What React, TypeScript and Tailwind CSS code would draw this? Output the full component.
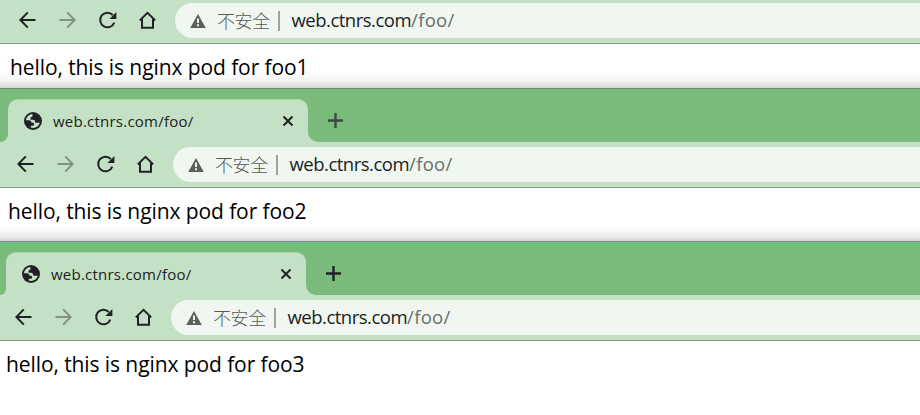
import React from "react";

const ink = "#202124";

function BackIcon() {
  return (
    <svg width="24" height="24" viewBox="0 0 24 24" fill="none" stroke={ink} strokeWidth="2" className="shrink-0">
      <path d="M20.5 12H5.7M12.8 4.4L5.4 12l7.4 7.6" />
    </svg>
  );
}

function ForwardIcon() {
  return (
    <svg width="24" height="24" viewBox="0 0 24 24" fill="none" stroke="#81927f" strokeWidth="2" className="shrink-0">
      <path d="M4.5 12h14.8M12.2 4.4L19.6 12l-7.4 7.6" />
    </svg>
  );
}

function ReloadIcon() {
  return (
    <svg width="24" height="24" viewBox="0 0 24 24" className="shrink-0">
      <path d="M19.3 14.6A7.3 7.3 0 1 1 17.8 7" fill="none" stroke={ink} strokeWidth="2" />
      <path d="M21.4 4v7h-7z" fill={ink} />
    </svg>
  );
}

function HomeIcon() {
  return (
    <svg width="24" height="24" viewBox="0 0 24 24" fill="none" stroke={ink} strokeWidth="2" className="shrink-0">
      <path d="M4.8 12.4L12.5 4.9l7.7 7.5M7 11v8.8h11V11" />
    </svg>
  );
}

function WarningIcon() {
  return (
    <svg width="16" height="14" viewBox="0 0 16 14" className="shrink-0">
      <path d="M8 0l7.8 14H.2z" fill="#5c605d" />
      <path d="M7 4.6h2v4.4H7zM7 10.3h2v2H7z" fill="#f0f7f0" />
    </svg>
  );
}

function GlobeIcon() {
  return (
    <svg width="18" height="18" viewBox="0 0 18 18" className="shrink-0">
      <circle cx="9" cy="9" r="9" fill={ink} />
      <path
        d="M2 8.3C2.3 5 5 2.2 8.6 2c-.3.8-.3 1.5 0 2.2L6.5 5.5v2.2h2.6c1.3 0 1.9.7 1.9 1.8 0 .8.6 1.3 1.4 1.3H15.8C15 13.9 12.3 16 9 16c-.8 0-1.5-.1-2.2-.4v-1.9h1.9c1 0 1.5-.7 1.5-1.4 0-.9-.6-1.5-1.5-1.5H7.6C7.4 9.2 6.5 8.3 5 8.3z"
        fill="#c5e1c5"
      />
    </svg>
  );
}

function TabStrip({ left, active }: { left: string; active: boolean }) {
  return (
    <div
      className={`h-[54px] shrink-0 border-t bg-[#c5e1c5] ${active ? "border-[#20b795]" : "border-[#668f69]"}`}
    >
      <div className="flex h-[53px]">
        <div className={`${left} h-full shrink-0 rounded-br-[9px] bg-[#7abb7c]`} />
        <div className="h-full w-[300px] shrink-0 bg-[linear-gradient(#7abb7c_30px,#c5e1c5_30px)] pt-[10px]">
          <div className="flex h-[43px] items-center rounded-t-[10px] border-t border-[#aad6ab] bg-[#c5e1c5] pl-4">
            <GlobeIcon />
            <span className="ml-[11px] w-[229px] text-[15px] leading-[20px] tracking-[0.23px] text-[#202124]">
              web.ctnrs.com/foo/
            </span>
            <svg width="12" height="12" viewBox="0 0 12 12" className="shrink-0">
              <path d="M1.5 1.5l9 9M10.5 1.5l-9 9" stroke={ink} strokeWidth="2" />
            </svg>
          </div>
        </div>
        <div className="flex h-full grow items-start rounded-bl-[10px] bg-[#7abb7c] pt-6 pl-5">
          <svg width="15" height="15" viewBox="0 0 15 15">
            <path d="M7.5 0v15M0 7.5h15" stroke={active ? ink : "#3a4a3c"} strokeWidth="2.4" />
          </svg>
        </div>
      </div>
    </div>
  );
}

function Toolbar({ pad, height }: { pad: string; height: string }) {
  return (
    <div className={`flex ${height} ${pad} shrink-0 items-end border-b border-[#879f87] bg-[#c5e1c5] pb-[5px]`}>
      <div className="flex h-[36px] shrink-0 items-center gap-4">
        <BackIcon />
        <ForwardIcon />
        <ReloadIcon />
        <HomeIcon />
      </div>
      <div className="ml-4 flex h-[35px] grow items-center rounded-l-full bg-[#f0f7f1] pl-[15px] whitespace-nowrap">
        <WarningIcon />
        <span className="ml-[11px] w-[53px] pb-px text-[18px] leading-[24px] font-light tracking-[-0.4px] text-[#555956] [font-family:'Noto_Sans_CJK_SC',sans-serif]">
          不安全
        </span>
        <span className="ml-2 h-5 w-[2px] bg-[#9da39e]" />
        <span className="ml-[11.5px] pb-[2px] text-[18.5px] leading-[24px] tracking-[-0.5px] text-[#202124]">
          web.ctnrs.com<span className="tracking-[0.3px] text-[#6a6f6b]">/foo/</span>
        </span>
      </div>
    </div>
  );
}

function Page({ className, text }: { className: string; text: string }) {
  return (
    <div className={`${className} shrink-0 text-[21px] leading-[28px] tracking-[-0.09px] whitespace-nowrap text-black`}>
      <p>{text}</p>
    </div>
  );
}

const fade =
  "bg-[linear-gradient(to_top,#d3d3d3_0px,#e3e3e3_3px,#f1f1f1_7px,#fafafa_11px,#ffffff_16px)]";

export default function App() {
  return (
    <div className="flex h-[415px] w-[920px] flex-col overflow-hidden bg-white [font-family:'Open_Sans','Noto_Sans_CJK_SC',sans-serif]">
      <Toolbar pad="pl-[15px]" height="h-[44px]" />
      <Page className={`h-[44px] pt-[9px] pl-[10px] ${fade}`} text="hello, this is nginx pod for foo1" />
      <TabStrip left="w-2" active={false} />
      <Toolbar pad="pl-[13px]" height="h-[46px]" />
      <Page className={`h-[53px] pt-[9px] pl-2 ${fade}`} text="hello, this is nginx pod for foo2" />
      <TabStrip left="w-1.5" active={true} />
      <Toolbar pad="pl-[11px]" height="h-[46px]" />
      <Page className="h-[74px] pt-[9px] pl-1.5" text="hello, this is nginx pod for foo3" />
    </div>
  );
}
